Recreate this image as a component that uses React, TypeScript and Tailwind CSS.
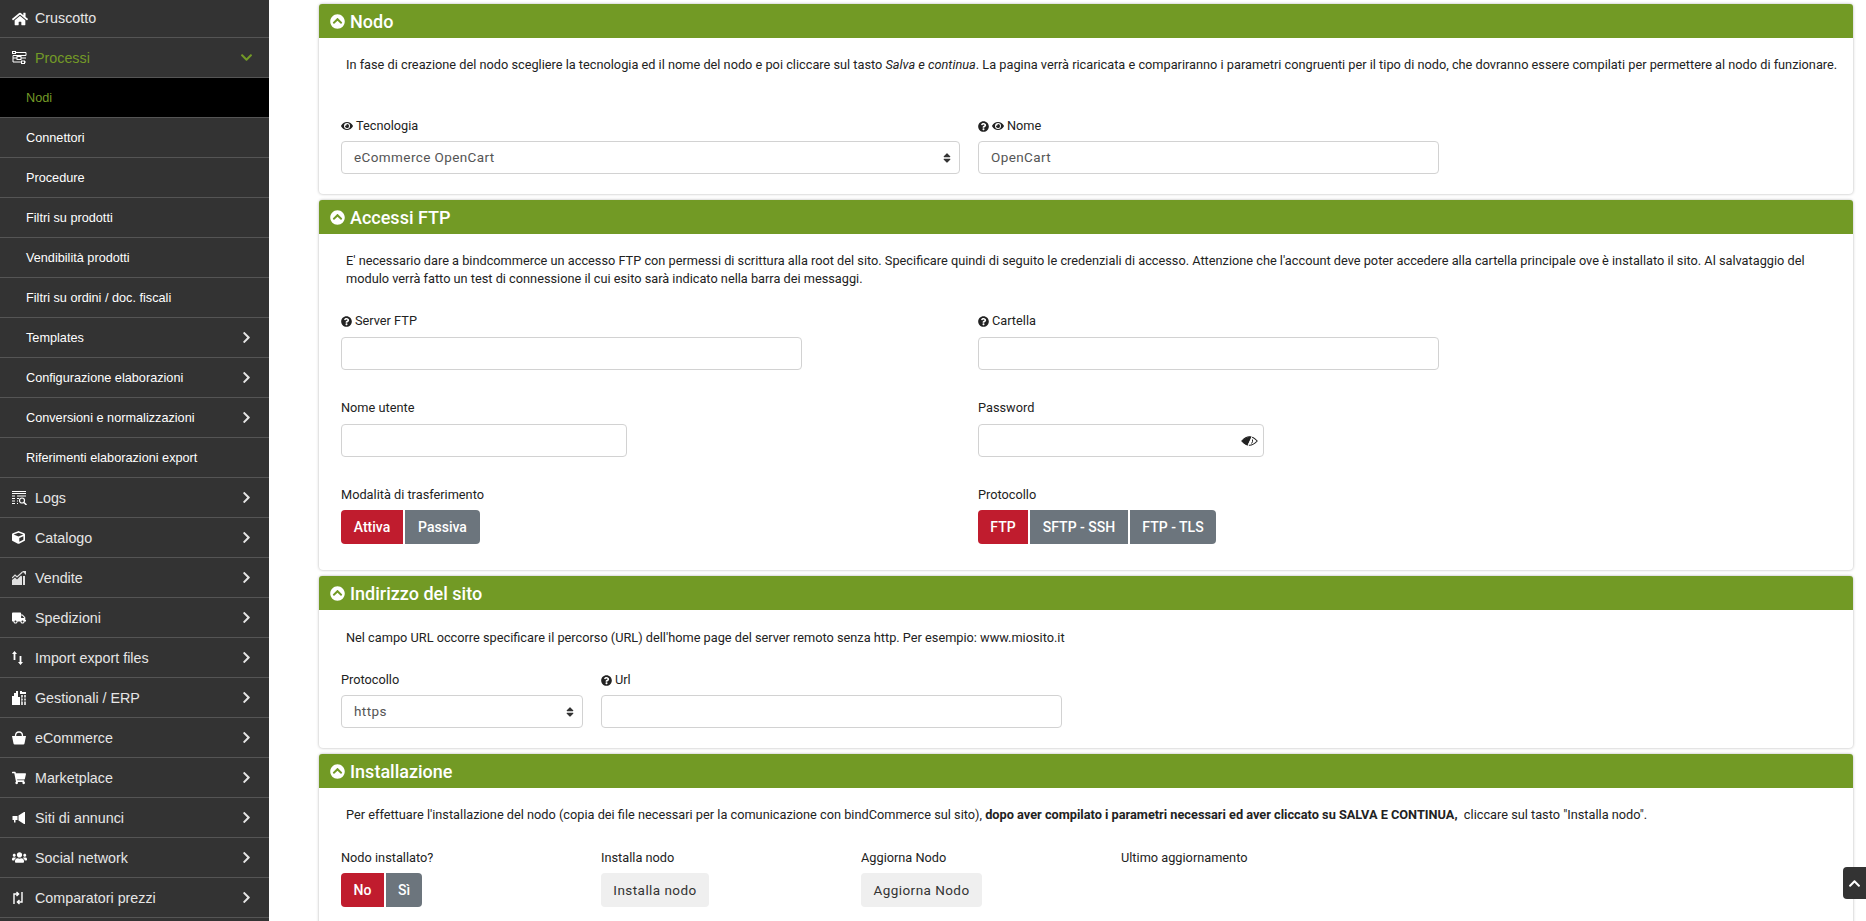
import React from "react";
import { FaHome, FaCube, FaTruck, FaShoppingCart, FaUsers, FaChevronRight, FaChevronDown, FaChevronUp, FaChevronCircleUp, FaEye, FaQuestionCircle, FaSort } from "react-icons/fa";

const ProcIcon = () => (
  <svg width="15" height="14" viewBox="0 0 15 14" fill="none" stroke="currentColor" strokeWidth="1">
    <rect x="0.5" y="0.5" width="3" height="2" /><path d="M4 1.5H14V4.500H1V7H5M9 7H14" /><rect x="5" y="5.500" width="4" height="3" /><path d="M1 7V11H9M12 11H14" /><rect x="9.500" y="10" width="3" height="2.500" />
  </svg>
);
const LogIcon = () => (
  <svg width="15" height="14" viewBox="0 0 15 14" fill="none" stroke="currentColor" strokeWidth="1">
    <path d="M0 .5H14M0 2.500H14M0 5H3M5 5H14M0 7.500H3M5 7.500H7M0 10H3M0 12.500H3M5 10H6M5 12.500H6" /><circle cx="10" cy="9.500" r="2.500" strokeWidth="1.200" /><path d="M12 11.500L14.500 14" strokeWidth="1.500" />
  </svg>
);
const ImpIcon = () => (
  <svg width="11" height="14" viewBox="0 0 11 14" fill="currentColor">
    <path d="M2.500 0L5 3H3.400V9H1.600V3H0zM8.500 14L6 11H7.600V5H9.400V11H11z" />
  </svg>
);
const CompIcon = () => (
  <svg width="12" height="14" viewBox="0 0 12 14" fill="none" stroke="currentColor" strokeWidth="1.400">
    <path d="M2 13V3H6M4.500 1L6.600 3L4.500 5M10 1V11H6M7.500 9L5.400 11L7.500 13" />
  </svg>
);
const ChartIcon = () => (
  <svg width="14" height="14" viewBox="0 0 14 14" fill="currentColor" opacity="0.85">
    <path d="M0 14V9L3 6.500L5 8.500L9 4.500L10 5.500V14zM11 14V5H13V14z" />
    <path d="M0 7L3 4L5 6L10.500 1" fill="none" stroke="currentColor" strokeWidth="1.200" />
    <path d="M10 0H14V4z" />
  </svg>
);
const ErpIcon = () => (
  <svg width="14" height="14" viewBox="0 0 14 14" fill="currentColor">
    <path d="M0 14V5H2V2H4V0H6V6H8V14z" />
    <path d="M8 0H10V1H14V3H8z" />
    <path d="M9 4H14V14H9z" opacity="0.75" />
    <path d="M9.500 7H14M9.500 10H14" stroke="#333" strokeWidth="1" />
    <path d="M11.500 4V14" stroke="#333" strokeWidth="1" />
  </svg>
);
const BagIcon = () => (
  <svg width="14" height="14" viewBox="0 0 14 14" fill="currentColor">
    <path d="M0 5H14L12.500 12.500Q12.300 13.500 11.300 13.500H2.700Q1.700 13.500 1.500 12.500z" />
    <path d="M3.500 5Q3.500 1 7 1T10.500 5" fill="none" stroke="currentColor" strokeWidth="1.300" />
  </svg>
);
const HornIcon = () => (
  <svg width="13" height="12" viewBox="0 0 13 12" fill="currentColor">
    <path d="M12 0H13V12H12L6.500 8.500V3.500z" />
    <path d="M0.500 4L5.500 4V8L3.500 8V10.500H2V8L.5 8z" />
  </svg>
);
const SlashEye = () => (
  <svg width="17" height="14" viewBox="0 0 17 14" className="ml-auto text-[#222]">
    <path d="M.8 7Q8.500 -1.500 16.200 7Q8.500 15.500 .8 7z" fill="none" stroke="currentColor" strokeWidth="1.100" />
    <path d="M.8 7Q4 3.500 8 2.700L11 2.700L6.300 11.500Q3 10 .8 7z" fill="currentColor" />
    <path d="M11.800 .5L6.500 13.500" stroke="#fff" strokeWidth="1" />
    <path d="M11.500 5.500Q12 8 10.500 9.500" fill="none" stroke="currentColor" strokeWidth="1" />
  </svg>
);

const sub = ["Nodi", "Connettori", "Procedure", "Filtri su prodotti", "Vendibilità prodotti", "Filtri su ordini / doc. fiscali"];
const subArrow = ["Templates", "Configurazione elaborazioni", "Conversioni e normalizzazioni"];
const mains: [React.ReactNode, string][] = [
  [<LogIcon />, "Logs"],
  [<FaCube size={13} />, "Catalogo"],
  [<ChartIcon />, "Vendite"],
  [<FaTruck size={14} />, "Spedizioni"],
  [<ImpIcon />, "Import export files"],
  [<ErpIcon />, "Gestionali / ERP"],
  [<BagIcon />, "eCommerce"],
  [<FaShoppingCart size={14} />, "Marketplace"],
  [<HornIcon />, "Siti di annunci"],
  [<FaUsers size={15} />, "Social network"],
  [<CompIcon />, "Comparatori prezzi"],
];

const Main = ({ icon, label, arrow = true, h = "h-10", pt = "pt-[3px]" }: { icon: React.ReactNode; label: string; arrow?: boolean; h?: string; pt?: string }) => (
  <div className={`${h} flex items-center pl-3 pr-4 border-b border-[#555] text-[#e6e6e6] text-[14.3px] shrink-0`}>
    <span className="w-[23px] flex justify-start text-white shrink-0">{icon}</span>
    <span className={pt}>{label}</span>
    {arrow && <FaChevronRight size={13} className="ml-auto text-[#e6e6e6]" />}
  </div>
);

const Sub = ({ label, active, arrow }: { label: string; active?: boolean; arrow?: boolean }) => (
  <div className={`h-10 flex items-center pl-[26px] pr-4 border-b border-[#555] text-[12.7px] shrink-0 ${active ? "bg-black text-[#739a27]" : "text-white"}`}>
    <span className="pt-[3px]">{label}</span>
    {arrow && <FaChevronRight size={13} className="ml-auto text-[#e6e6e6]" />}
  </div>
);

const Card = ({ title, children, bodyH }: { title: string; children: React.ReactNode; bodyH: string }) => (
  <section className={`bg-white rounded-[4px] shadow-[0_0_3px_rgba(0,0,0,0.3)] shrink-0 ${bodyH}`}>
    <header className="h-[34px] bg-[#729a25] rounded-t-[3px] flex items-center pl-[11px] text-white font-medium text-[18px] gap-[5px]">
      <FaChevronCircleUp size={15} />
      <span>{title}</span>
    </header>
    <div className="pl-[22px] pr-[10px]">{children}</div>
  </section>
);

const Label = ({ children }: { children: React.ReactNode }) => (
  <div className="text-[12.75px] leading-[16px] text-[#222] flex items-center gap-[3px]">{children}</div>
);
const Q = () => <FaQuestionCircle size={11} />;
const E = () => <FaEye size={12} />;

const Field = ({ w, value, arrow, eye, tight }: { w: string; value?: string; arrow?: boolean; eye?: boolean; tight?: boolean }) => (
  <div className={`${w} h-[33px] border border-[#d2d2d2] rounded-[4px] flex items-center pl-3 pr-[5px] text-[13.5px] text-[#555] tracking-[0.4px] ${tight ? "mt-[7px]" : "mt-[8px]"}`}>
    <span>{value}</span>
    {arrow && <FaSort size={12} className="ml-auto mr-[1px] text-[#333]" />}
    {eye && <SlashEye />}
  </div>
);

const Btns = ({ items }: { items: [string, string, boolean][] }) => (
  <div className="flex gap-[2px] mt-[7px]">
    {items.map(([t, w, on], i) => (
      <div key={t} className={`${w} h-[34px] flex items-center justify-center text-white text-[14px] font-medium ${on ? "bg-[#c01c2e]" : "bg-[#6c757d]"} ${i === 0 ? "rounded-l-[4px]" : ""} ${i === items.length - 1 ? "rounded-r-[4px]" : ""}`}>{t}</div>
    ))}
  </div>
);

const Desc = ({ children, className }: { children: React.ReactNode; className: string }) => (
  <p className={`text-[12.75px] leading-[18px] text-[#222] pl-[5px] ${className}`}>{children}</p>
);

const Plain = ({ w, children }: { w: string; children: string }) => (
  <div className={`mt-[7px] ${w} h-[34px] bg-[#efefef] rounded-[4px] flex items-center justify-center text-[13.5px] text-[#333] tracking-[0.45px]`}>{children}</div>
);

export default function App() {
  return (
    <div className="h-[921px] w-full overflow-hidden flex bg-white" style={{ fontFamily: "Roboto, sans-serif" }}>
      <aside className="w-[269px] shrink-0 bg-[#333] flex flex-col" style={{ fontFamily: '"Liberation Sans", sans-serif' }}>
        <Main icon={<FaHome size={16} />} label="Cruscotto" arrow={false} h="h-[38px]" pt="pt-[1px]" />
        <div className="h-10 flex items-center pl-3 pr-4 border-b border-[#555] text-[14.3px] text-[#739a27] shrink-0">
          <span className="w-[23px] flex justify-start text-white shrink-0"><ProcIcon /></span>
          <span className="pt-[3px]">Processi</span>
          <FaChevronDown size={13} className="ml-auto text-[#739a27]" />
        </div>
        {sub.map((s, i) => <Sub key={s} label={s} active={i === 0} />)}
        {subArrow.map((s) => <Sub key={s} label={s} arrow />)}
        <Sub label="Riferimenti elaborazioni export" />
        {mains.map(([ic, l]) => <Main key={l} icon={ic} label={l} />)}
      </aside>
      <main className="flex-1 min-w-0 pl-[50px] pr-[13px] pt-[4px] flex flex-col gap-[6px] relative">
        <Card title="Nodo" bodyH="h-[190px]">
          <Desc className="pt-[18px]">In fase di creazione del nodo scegliere la tecnologia ed il nome del nodo e poi cliccare sul tasto <em>Salva e continua</em>. La pagina verrà ricaricata e compariranno i parametri congruenti per il tipo di nodo, che dovranno essere compilati per permettere al nodo di funzionare.</Desc>
          <div className="flex mt-[44px]">
            <div className="w-[637px]"><Label><E /> Tecnologia</Label><Field w="w-[619px]" value="eCommerce OpenCart" arrow tight /></div>
            <div><Label><Q /><E /> Nome</Label><Field w="w-[461px]" value="OpenCart" tight /></div>
          </div>
        </Card>
        <Card title="Accessi FTP" bodyH="h-[370px]">
          <Desc className="pt-[18px]">E' necessario dare a bindcommerce un accesso FTP con permessi di scrittura alla root del sito. Specificare quindi di seguito le credenziali di accesso. Attenzione che l'account deve poter accedere alla cartella principale ove è installato il sito. Al salvataggio del modulo verrà fatto un test di connessione il cui esito sarà indicato nella barra dei messaggi.</Desc>
          <div className="flex mt-[25px]">
            <div className="w-[637px]"><Label><Q /> Server FTP</Label><Field w="w-[461px]" /></div>
            <div><Label><Q /> Cartella</Label><Field w="w-[461px]" /></div>
          </div>
          <div className="flex mt-[30px]">
            <div className="w-[637px]"><Label>Nome utente</Label><Field w="w-[286px]" /></div>
            <div><Label>Password</Label><Field w="w-[286px]" eye /></div>
          </div>
          <div className="flex mt-[30px]">
            <div className="w-[637px]"><Label>Modalità di trasferimento</Label><Btns items={[["Attiva", "w-[62px]", true], ["Passiva", "w-[75px]", false]]} /></div>
            <div><Label>Protocollo</Label><Btns items={[["FTP", "w-[50px]", true], ["SFTP - SSH", "w-[98px]", false], ["FTP - TLS", "w-[86px]", false]]} /></div>
          </div>
        </Card>
        <Card title="Indirizzo del sito" bodyH="h-[172px]">
          <Desc className="pt-[19px]">Nel campo URL occorre specificare il percorso (URL) dell'home page del server remoto senza http. Per esempio: www.miosito.it</Desc>
          <div className="flex mt-[25px]">
            <div className="w-[260px]"><Label>Protocollo</Label><Field w="w-[242px]" value="https" arrow tight /></div>
            <div><Label><Q /> Url</Label><Field w="w-[461px]" tight /></div>
          </div>
        </Card>
        <Card title="Installazione" bodyH="h-[200px]">
          <Desc className="pt-[18px]">Per effettuare l'installazione del nodo (copia dei file necessari per la comunicazione con bindCommerce sul sito), <b>dopo aver compilato i parametri necessari ed aver cliccato su SALVA E CONTINUA,</b>&nbsp; cliccare sul tasto "Installa nodo".</Desc>
          <div className="flex mt-[26px]">
            <div className="w-[260px]"><Label>Nodo installato?</Label><Btns items={[["No", "w-[43px]", true], ["Sì", "w-[36px]", false]]} /></div>
            <div className="w-[260px]"><Label>Installa nodo</Label><Plain w="w-[108px]">Installa nodo</Plain></div>
            <div className="w-[260px]"><Label>Aggiorna Nodo</Label><Plain w="w-[121px]">Aggiorna Nodo</Plain></div>
            <div><Label>Ultimo aggiornamento</Label></div>
          </div>
        </Card>
        <div className="absolute right-0 top-[867px] w-[23px] h-[32px] bg-[#333] rounded-l-[4px] flex items-center justify-center text-white"><FaChevronUp size={13} /></div>
      </main>
    </div>
  );
}
